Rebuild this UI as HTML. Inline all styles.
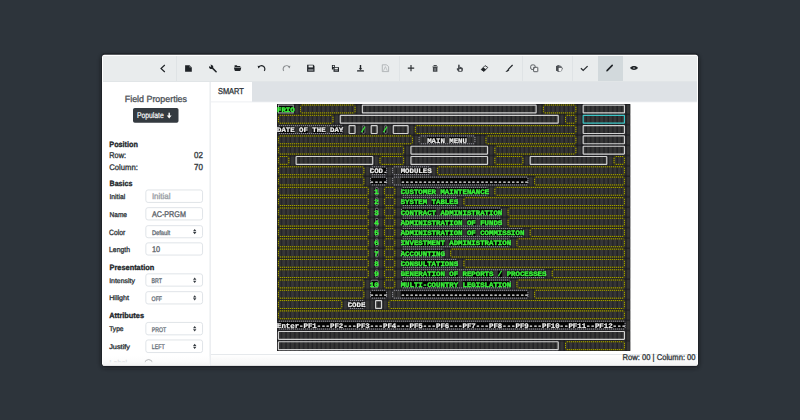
<!DOCTYPE html>
<html><head><meta charset="utf-8"><title>Editor</title><style>
html,body{margin:0;padding:0;width:800px;height:420px;overflow:hidden;background:#2d343b}
svg{display:block}
text{font-family:"Liberation Sans",sans-serif;text-rendering:geometricPrecision}
text.tm{font-family:"Liberation Mono",monospace;font-weight:bold;font-size:6.95px;white-space:pre}
</style></head><body>
<svg width="800" height="420" viewBox="0 0 800 420">
<defs>
<filter id="sh" filterUnits="userSpaceOnUse" x="60" y="20" width="680" height="390"><feGaussianBlur stdDeviation="2.2"/></filter>
<pattern id="cell" x="0" y="0" width="4.4162" height="10.2917" patternUnits="userSpaceOnUse"><rect x="0.6" y="0.6" width="3.4162" height="9.2917" fill="#363636"/></pattern>
<linearGradient id="fade" x1="0" y1="0" x2="0" y2="1"><stop offset="0" stop-color="#fff" stop-opacity="0"/><stop offset="0.35" stop-color="#fff" stop-opacity="0.85"/><stop offset="1" stop-color="#f8f8f8" stop-opacity="0.97"/></linearGradient>
<filter id="nop" x="0" y="0" width="1" height="1"><feOffset dx="0" dy="0"/></filter>

</defs>
<rect x="0" y="0" width="800" height="420" fill="#2d343b"/>
<rect x="101.5" y="55.5" width="597" height="312" rx="3" fill="#15181d" opacity="0.75" filter="url(#sh)"/>
<rect x="101.6" y="54.1" width="596.8" height="312.2" rx="3" fill="none" stroke="#161a20" stroke-width="1.2" opacity="0.35"/>
<rect x="103" y="53.4" width="594" height="1.2" fill="#161a20" opacity="0.45"/>
<rect x="102" y="54.8" width="596" height="311" rx="2.5" fill="#ffffff"/>
<rect x="103" y="56" width="594" height="26" fill="#e9eced"/>
<rect x="176" y="56" width="1" height="26" fill="#dfe3e5"/>
<rect x="399" y="56" width="1" height="26" fill="#dfe3e5"/>
<rect x="522" y="56" width="1" height="26" fill="#dfe3e5"/>
<rect x="572" y="56" width="1" height="26" fill="#dfe3e5"/>
<rect x="103" y="81" width="594" height="1" fill="#e1e5e7"/>
<rect x="598" y="56" width="25" height="25" fill="#d2d9dc"/>
<rect x="209.4" y="82" width="1.6" height="283.5" fill="#eceef1"/>
<rect x="211" y="82" width="486" height="20" fill="#dee2e6"/>
<rect x="211" y="82" width="41" height="20" fill="#ffffff"/>
<rect x="211" y="101.5" width="486" height="0.8" fill="#e9ecef"/>
<text x="218" y="93.8" font-size="8.576" font-weight="normal" fill="#343a40" stroke="#343a40" stroke-width="0.34" textLength="25.8" lengthAdjust="spacingAndGlyphs">SMART</text>
<g transform="translate(277,104)" filter="url(#nop)">
<rect x="0" y="0" width="353.3" height="247" fill="#18181c"/>
<rect x="0" y="0" width="353.3" height="247" fill="url(#cell)"/>
<rect x="0.3" y="1.9" width="17.06" height="6.6" fill="#050505"/>
<rect x="0.3" y="22.48" width="17.06" height="6.6" fill="#050505"/>
<rect x="22.38" y="22.48" width="8.23" height="6.6" fill="#050505"/>
<rect x="35.63" y="22.48" width="12.65" height="6.6" fill="#050505"/>
<rect x="53.29" y="22.48" width="12.65" height="6.6" fill="#050505"/>
<rect x="84.21" y="22.48" width="3.82" height="6.6" fill="#050505"/>
<rect x="106.29" y="22.48" width="3.82" height="6.6" fill="#050505"/>
<rect x="150.45" y="32.77" width="17.06" height="6.6" fill="#050505"/>
<rect x="172.53" y="32.77" width="17.06" height="6.6" fill="#050505"/>
<rect x="93.04" y="63.65" width="17.06" height="6.6" fill="#050505"/>
<rect x="123.95" y="63.65" width="30.31" height="6.6" fill="#050505"/>
<rect x="93.04" y="73.94" width="17.06" height="6.6" fill="#050505"/>
<rect x="123.95" y="73.94" width="127.47" height="6.6" fill="#050505"/>
<rect x="97.46" y="84.23" width="3.82" height="6.6" fill="#050505"/>
<rect x="123.95" y="84.23" width="34.73" height="6.6" fill="#050505"/>
<rect x="163.7" y="84.23" width="47.98" height="6.6" fill="#050505"/>
<rect x="97.46" y="94.53" width="3.82" height="6.6" fill="#050505"/>
<rect x="123.95" y="94.53" width="25.9" height="6.6" fill="#050505"/>
<rect x="154.87" y="94.53" width="25.9" height="6.6" fill="#050505"/>
<rect x="97.46" y="104.82" width="3.82" height="6.6" fill="#050505"/>
<rect x="123.95" y="104.82" width="34.73" height="6.6" fill="#050505"/>
<rect x="163.7" y="104.82" width="61.23" height="6.6" fill="#050505"/>
<rect x="97.46" y="115.11" width="3.82" height="6.6" fill="#050505"/>
<rect x="123.95" y="115.11" width="61.23" height="6.6" fill="#050505"/>
<rect x="190.2" y="115.11" width="8.23" height="6.6" fill="#050505"/>
<rect x="203.45" y="115.11" width="21.48" height="6.6" fill="#050505"/>
<rect x="97.46" y="125.4" width="3.82" height="6.6" fill="#050505"/>
<rect x="123.95" y="125.4" width="61.23" height="6.6" fill="#050505"/>
<rect x="190.2" y="125.4" width="8.23" height="6.6" fill="#050505"/>
<rect x="203.45" y="125.4" width="43.56" height="6.6" fill="#050505"/>
<rect x="97.46" y="135.69" width="3.82" height="6.6" fill="#050505"/>
<rect x="123.95" y="135.69" width="43.56" height="6.6" fill="#050505"/>
<rect x="172.53" y="135.69" width="61.23" height="6.6" fill="#050505"/>
<rect x="97.46" y="145.98" width="3.82" height="6.6" fill="#050505"/>
<rect x="123.95" y="145.98" width="43.56" height="6.6" fill="#050505"/>
<rect x="97.46" y="156.28" width="3.82" height="6.6" fill="#050505"/>
<rect x="123.95" y="156.28" width="56.81" height="6.6" fill="#050505"/>
<rect x="97.46" y="166.57" width="3.82" height="6.6" fill="#050505"/>
<rect x="123.95" y="166.57" width="43.56" height="6.6" fill="#050505"/>
<rect x="172.53" y="166.57" width="8.23" height="6.6" fill="#050505"/>
<rect x="185.78" y="166.57" width="30.31" height="6.6" fill="#050505"/>
<rect x="221.11" y="166.57" width="3.82" height="6.6" fill="#050505"/>
<rect x="229.94" y="166.57" width="39.15" height="6.6" fill="#050505"/>
<rect x="93.04" y="176.86" width="8.23" height="6.6" fill="#050505"/>
<rect x="123.95" y="176.86" width="56.81" height="6.6" fill="#050505"/>
<rect x="185.78" y="176.86" width="47.98" height="6.6" fill="#050505"/>
<rect x="93.04" y="187.15" width="17.06" height="6.6" fill="#050505"/>
<rect x="123.95" y="187.15" width="127.47" height="6.6" fill="#050505"/>
<rect x="70.96" y="197.44" width="17.06" height="6.6" fill="#050505"/>
<rect x="0.3" y="218.03" width="348.28" height="6.6" fill="#050505"/>
<rect x="1.45" y="1.05" width="14.77" height="7.85" fill="none" stroke="#b4b4b8" stroke-width="0.9"/>
<rect x="23.53" y="1.05" width="54.51" height="7.85" rx="1.2" fill="none" stroke="#504e08" stroke-width="1.045"/><g fill="none" stroke="#a8a400" stroke-width="0.95" stroke-dasharray="1 1"><path d="M24.73 1.05H76.84" stroke-dashoffset="1.73"/><path d="M24.73 8.9H76.84" stroke-dashoffset="1.73"/><path d="M23.53 2.25V7.7" stroke-dashoffset="1.25"/><path d="M78.04 2.25V7.7" stroke-dashoffset="1.25"/></g>
<rect x="85.36" y="1.05" width="173.75" height="7.85" rx="0.45" fill="none" stroke="#d2d2d2" stroke-width="1.15"/>
<rect x="266.42" y="1.05" width="32.43" height="7.85" rx="1.2" fill="none" stroke="#504e08" stroke-width="1.045"/><g fill="none" stroke="#a8a400" stroke-width="0.95" stroke-dasharray="1 1"><path d="M267.62 1.05H297.66" stroke-dashoffset="1.62"/><path d="M267.62 8.9H297.66" stroke-dashoffset="1.62"/><path d="M266.42 2.25V7.7" stroke-dashoffset="1.25"/><path d="M298.86 2.25V7.7" stroke-dashoffset="1.25"/></g>
<rect x="306.17" y="1.05" width="41.26" height="7.85" rx="0.45" fill="none" stroke="#d2d2d2" stroke-width="1.15"/>
<rect x="1.45" y="11.34" width="54.51" height="7.85" rx="1.2" fill="none" stroke="#504e08" stroke-width="1.045"/><g fill="none" stroke="#a8a400" stroke-width="0.95" stroke-dasharray="1 1"><path d="M2.65 11.34H54.76" stroke-dashoffset="1.65"/><path d="M2.65 19.19H54.76" stroke-dashoffset="1.65"/><path d="M1.45 12.54V17.99" stroke-dashoffset="1.54"/><path d="M55.96 12.54V17.99" stroke-dashoffset="1.54"/></g>
<rect x="63.28" y="11.34" width="217.91" height="7.85" rx="0.45" fill="none" stroke="#d2d2d2" stroke-width="1.15"/>
<rect x="288.51" y="11.34" width="10.35" height="7.85" rx="1.2" fill="none" stroke="#504e08" stroke-width="1.045"/><g fill="none" stroke="#a8a400" stroke-width="0.95" stroke-dasharray="1 1"><path d="M289.71 11.34H297.66" stroke-dashoffset="1.71"/><path d="M289.71 19.19H297.66" stroke-dashoffset="1.71"/><path d="M288.51 12.54V17.99" stroke-dashoffset="1.54"/><path d="M298.86 12.54V17.99" stroke-dashoffset="1.54"/></g>
<rect x="306.17" y="11.34" width="41.26" height="7.85" rx="0.35" fill="none" stroke="#3cc6c6" stroke-width="1.15"/>
<rect x="0.8" y="21.63" width="64.64" height="7.85" rx="0.9" fill="none" stroke="#404046" stroke-width="0.9900000000000001"/><g fill="none" stroke="#98989e" stroke-width="0.9" stroke-dasharray="1 1"><path d="M1.7 21.63H64.54" stroke-dashoffset="1.7"/><path d="M1.7 29.48H64.54" stroke-dashoffset="1.7"/><path d="M0.8 22.53V28.58" stroke-dashoffset="1.53"/><path d="M65.44 22.53V28.58" stroke-dashoffset="1.53"/></g>
<rect x="72.11" y="21.63" width="5.93" height="7.85" rx="0.45" fill="none" stroke="#d2d2d2" stroke-width="1.15"/>
<rect x="85.21" y="21.83" width="2.72" height="7.45" rx="1" fill="none" stroke="#8c8c92" stroke-width="0.8"/>
<rect x="94.19" y="21.63" width="5.93" height="7.85" rx="0.45" fill="none" stroke="#d2d2d2" stroke-width="1.15"/>
<rect x="107.29" y="21.83" width="2.72" height="7.45" rx="1" fill="none" stroke="#8c8c92" stroke-width="0.8"/>
<rect x="116.27" y="21.63" width="14.77" height="7.85" rx="0.45" fill="none" stroke="#d2d2d2" stroke-width="1.15"/>
<rect x="138.35" y="21.63" width="160.5" height="7.85" rx="1.2" fill="none" stroke="#504e08" stroke-width="1.045"/><g fill="none" stroke="#a8a400" stroke-width="0.95" stroke-dasharray="1 1"><path d="M139.55 21.63H297.66" stroke-dashoffset="1.55"/><path d="M139.55 29.48H297.66" stroke-dashoffset="1.55"/><path d="M138.35 22.83V28.28" stroke-dashoffset="1.83"/><path d="M298.86 22.83V28.28" stroke-dashoffset="1.83"/></g>
<rect x="306.17" y="21.63" width="41.26" height="7.85" rx="0.45" fill="none" stroke="#d2d2d2" stroke-width="1.15"/>
<rect x="1.45" y="31.93" width="134" height="7.85" rx="1.2" fill="none" stroke="#504e08" stroke-width="1.045"/><g fill="none" stroke="#a8a400" stroke-width="0.95" stroke-dasharray="1 1"><path d="M2.65 31.93H134.25" stroke-dashoffset="1.65"/><path d="M2.65 39.77H134.25" stroke-dashoffset="1.65"/><path d="M1.45 33.12V38.57" stroke-dashoffset="1.12"/><path d="M135.45 33.12V38.57" stroke-dashoffset="1.12"/></g>
<rect x="142.12" y="31.93" width="55.81" height="7.85" rx="0.9" fill="none" stroke="#404046" stroke-width="0.9900000000000001"/><g fill="none" stroke="#98989e" stroke-width="0.9" stroke-dasharray="1 1"><path d="M143.02 31.93H197.03" stroke-dashoffset="1.02"/><path d="M143.02 39.77H197.03" stroke-dashoffset="1.02"/><path d="M142.12 32.83V38.88" stroke-dashoffset="1.83"/><path d="M197.93 32.83V38.88" stroke-dashoffset="1.83"/></g>
<rect x="209.01" y="31.93" width="89.84" height="7.85" rx="1.2" fill="none" stroke="#504e08" stroke-width="1.045"/><g fill="none" stroke="#a8a400" stroke-width="0.95" stroke-dasharray="1 1"><path d="M210.21 31.93H297.66" stroke-dashoffset="1.21"/><path d="M210.21 39.77H297.66" stroke-dashoffset="1.21"/><path d="M209.01 33.12V38.57" stroke-dashoffset="1.12"/><path d="M298.86 33.12V38.57" stroke-dashoffset="1.12"/></g>
<rect x="306.17" y="31.93" width="41.26" height="7.85" rx="0.45" fill="none" stroke="#d2d2d2" stroke-width="1.15"/>
<rect x="1.45" y="42.22" width="125.17" height="7.85" rx="1.2" fill="none" stroke="#504e08" stroke-width="1.045"/><g fill="none" stroke="#a8a400" stroke-width="0.95" stroke-dasharray="1 1"><path d="M2.65 42.22H125.42" stroke-dashoffset="1.65"/><path d="M2.65 50.07H125.42" stroke-dashoffset="1.65"/><path d="M1.45 43.42V48.87" stroke-dashoffset="1.42"/><path d="M126.62 43.42V48.87" stroke-dashoffset="1.42"/></g>
<rect x="133.94" y="42.22" width="76.59" height="7.85" rx="0.45" fill="none" stroke="#d2d2d2" stroke-width="1.15"/>
<rect x="217.85" y="42.22" width="81.01" height="7.85" rx="1.2" fill="none" stroke="#504e08" stroke-width="1.045"/><g fill="none" stroke="#a8a400" stroke-width="0.95" stroke-dasharray="1 1"><path d="M219.05 42.22H297.66" stroke-dashoffset="1.05"/><path d="M219.05 50.07H297.66" stroke-dashoffset="1.05"/><path d="M217.85 43.42V48.87" stroke-dashoffset="1.42"/><path d="M298.86 43.42V48.87" stroke-dashoffset="1.42"/></g>
<rect x="306.17" y="42.22" width="41.26" height="7.85" rx="0.45" fill="none" stroke="#d2d2d2" stroke-width="1.15"/>
<rect x="1.45" y="52.51" width="10.35" height="7.85" rx="1.2" fill="none" stroke="#504e08" stroke-width="1.045"/><g fill="none" stroke="#a8a400" stroke-width="0.95" stroke-dasharray="1 1"><path d="M2.65 52.51H10.6" stroke-dashoffset="1.65"/><path d="M2.65 60.36H10.6" stroke-dashoffset="1.65"/><path d="M1.45 53.71V59.16" stroke-dashoffset="1.71"/><path d="M11.8 53.71V59.16" stroke-dashoffset="1.71"/></g>
<rect x="19.11" y="52.51" width="76.59" height="7.85" rx="0.45" fill="none" stroke="#d2d2d2" stroke-width="1.15"/>
<rect x="103.02" y="52.51" width="23.6" height="7.85" rx="1.2" fill="none" stroke="#504e08" stroke-width="1.045"/><g fill="none" stroke="#a8a400" stroke-width="0.95" stroke-dasharray="1 1"><path d="M104.22 52.51H125.42" stroke-dashoffset="1.22"/><path d="M104.22 60.36H125.42" stroke-dashoffset="1.22"/><path d="M103.02 53.71V59.16" stroke-dashoffset="1.71"/><path d="M126.62 53.71V59.16" stroke-dashoffset="1.71"/></g>
<rect x="133.94" y="52.51" width="76.59" height="7.85" rx="0.45" fill="none" stroke="#d2d2d2" stroke-width="1.15"/>
<rect x="217.85" y="52.51" width="28.01" height="7.85" rx="1.2" fill="none" stroke="#504e08" stroke-width="1.045"/><g fill="none" stroke="#a8a400" stroke-width="0.95" stroke-dasharray="1 1"><path d="M219.05 52.51H244.66" stroke-dashoffset="1.05"/><path d="M219.05 60.36H244.66" stroke-dashoffset="1.05"/><path d="M217.85 53.71V59.16" stroke-dashoffset="1.71"/><path d="M245.86 53.71V59.16" stroke-dashoffset="1.71"/></g>
<rect x="253.18" y="52.51" width="76.59" height="7.85" rx="0.45" fill="none" stroke="#d2d2d2" stroke-width="1.15"/>
<rect x="337.08" y="52.51" width="10.35" height="7.85" rx="1.2" fill="none" stroke="#504e08" stroke-width="1.045"/><g fill="none" stroke="#a8a400" stroke-width="0.95" stroke-dasharray="1 1"><path d="M338.28 52.51H346.23" stroke-dashoffset="1.29"/><path d="M338.28 60.36H346.23" stroke-dashoffset="1.29"/><path d="M337.08 53.71V59.16" stroke-dashoffset="1.71"/><path d="M347.43 53.71V59.16" stroke-dashoffset="1.71"/></g>
<rect x="1.45" y="62.8" width="85.42" height="7.85" rx="1.2" fill="none" stroke="#504e08" stroke-width="1.045"/><g fill="none" stroke="#a8a400" stroke-width="0.95" stroke-dasharray="1 1"><path d="M2.65 62.8H85.67" stroke-dashoffset="1.65"/><path d="M2.65 70.65H85.67" stroke-dashoffset="1.65"/><path d="M1.45 64V69.45" stroke-dashoffset="0"/><path d="M86.87 64V69.45" stroke-dashoffset="0"/></g>
<rect x="93.54" y="62.8" width="16.07" height="7.85" rx="0.9" fill="none" stroke="#404046" stroke-width="0.9900000000000001"/><g fill="none" stroke="#98989e" stroke-width="0.9" stroke-dasharray="1 1"><path d="M94.44 62.8H108.71" stroke-dashoffset="1.44"/><path d="M94.44 70.65H108.71" stroke-dashoffset="1.44"/><path d="M93.54 63.7V69.75" stroke-dashoffset="1.7"/><path d="M109.61 63.7V69.75" stroke-dashoffset="1.7"/></g>
<rect x="115.62" y="62.8" width="38.15" height="7.85" rx="0.9" fill="none" stroke="#404046" stroke-width="0.9900000000000001"/><g fill="none" stroke="#98989e" stroke-width="0.9" stroke-dasharray="1 1"><path d="M116.52 62.8H152.87" stroke-dashoffset="1.52"/><path d="M116.52 70.65H152.87" stroke-dashoffset="1.52"/><path d="M115.62 63.7V69.75" stroke-dashoffset="1.7"/><path d="M153.77 63.7V69.75" stroke-dashoffset="1.7"/></g>
<rect x="160.43" y="62.8" width="187" height="7.85" rx="1.2" fill="none" stroke="#504e08" stroke-width="1.045"/><g fill="none" stroke="#a8a400" stroke-width="0.95" stroke-dasharray="1 1"><path d="M161.63 62.8H346.23" stroke-dashoffset="1.63"/><path d="M161.63 70.65H346.23" stroke-dashoffset="1.63"/><path d="M160.43 64V69.45" stroke-dashoffset="0"/><path d="M347.43 64V69.45" stroke-dashoffset="0"/></g>
<rect x="1.45" y="73.09" width="85.42" height="7.85" rx="1.2" fill="none" stroke="#504e08" stroke-width="1.045"/><g fill="none" stroke="#a8a400" stroke-width="0.95" stroke-dasharray="1 1"><path d="M2.65 73.09H85.67" stroke-dashoffset="1.65"/><path d="M2.65 80.94H85.67" stroke-dashoffset="1.65"/><path d="M1.45 74.29V79.74" stroke-dashoffset="1.29"/><path d="M86.87 74.29V79.74" stroke-dashoffset="1.29"/></g>
<rect x="93.54" y="73.09" width="16.07" height="7.85" rx="0.9" fill="none" stroke="#404046" stroke-width="0.9900000000000001"/><g fill="none" stroke="#98989e" stroke-width="0.9" stroke-dasharray="1 1"><path d="M94.44 73.09H108.71" stroke-dashoffset="1.44"/><path d="M94.44 80.94H108.71" stroke-dashoffset="1.44"/><path d="M93.54 73.99V80.04" stroke-dashoffset="1.99"/><path d="M109.61 73.99V80.04" stroke-dashoffset="1.99"/></g>
<rect x="115.62" y="73.09" width="135.3" height="7.85" rx="0.9" fill="none" stroke="#404046" stroke-width="0.9900000000000001"/><g fill="none" stroke="#98989e" stroke-width="0.9" stroke-dasharray="1 1"><path d="M116.52 73.09H250.03" stroke-dashoffset="1.52"/><path d="M116.52 80.94H250.03" stroke-dashoffset="1.52"/><path d="M115.62 73.99V80.04" stroke-dashoffset="1.99"/><path d="M250.93 73.99V80.04" stroke-dashoffset="1.99"/></g>
<rect x="257.59" y="73.09" width="89.84" height="7.85" rx="1.2" fill="none" stroke="#504e08" stroke-width="1.045"/><g fill="none" stroke="#a8a400" stroke-width="0.95" stroke-dasharray="1 1"><path d="M258.79 73.09H346.23" stroke-dashoffset="1.79"/><path d="M258.79 80.94H346.23" stroke-dashoffset="1.79"/><path d="M257.59 74.29V79.74" stroke-dashoffset="1.29"/><path d="M347.43 74.29V79.74" stroke-dashoffset="1.29"/></g>
<rect x="1.45" y="83.38" width="89.84" height="7.85" rx="1.2" fill="none" stroke="#504e08" stroke-width="1.045"/><g fill="none" stroke="#a8a400" stroke-width="0.95" stroke-dasharray="1 1"><path d="M2.65 83.38H90.09" stroke-dashoffset="1.65"/><path d="M2.65 91.23H90.09" stroke-dashoffset="1.65"/><path d="M1.45 84.58V90.03" stroke-dashoffset="1.58"/><path d="M91.29 84.58V90.03" stroke-dashoffset="1.58"/></g>
<rect x="98.46" y="83.58" width="2.72" height="7.45" rx="1" fill="none" stroke="#8c8c92" stroke-width="0.8"/>
<rect x="107.44" y="83.38" width="10.35" height="7.85" rx="1.2" fill="none" stroke="#504e08" stroke-width="1.045"/><g fill="none" stroke="#a8a400" stroke-width="0.95" stroke-dasharray="1 1"><path d="M108.64 83.38H116.59" stroke-dashoffset="1.64"/><path d="M108.64 91.23H116.59" stroke-dashoffset="1.64"/><path d="M107.44 84.58V90.03" stroke-dashoffset="1.58"/><path d="M117.79 84.58V90.03" stroke-dashoffset="1.58"/></g>
<rect x="124.45" y="83.38" width="86.72" height="7.85" rx="0.9" fill="none" stroke="#404046" stroke-width="0.9900000000000001"/><g fill="none" stroke="#98989e" stroke-width="0.9" stroke-dasharray="1 1"><path d="M125.36 83.38H210.28" stroke-dashoffset="1.35"/><path d="M125.36 91.23H210.28" stroke-dashoffset="1.35"/><path d="M124.45 84.28V90.33" stroke-dashoffset="1.28"/><path d="M211.18 84.28V90.33" stroke-dashoffset="1.28"/></g>
<rect x="217.85" y="83.38" width="129.59" height="7.85" rx="1.2" fill="none" stroke="#504e08" stroke-width="1.045"/><g fill="none" stroke="#a8a400" stroke-width="0.95" stroke-dasharray="1 1"><path d="M219.05 83.38H346.23" stroke-dashoffset="1.05"/><path d="M219.05 91.23H346.23" stroke-dashoffset="1.05"/><path d="M217.85 84.58V90.03" stroke-dashoffset="1.58"/><path d="M347.43 84.58V90.03" stroke-dashoffset="1.58"/></g>
<rect x="1.45" y="93.67" width="89.84" height="7.85" rx="1.2" fill="none" stroke="#504e08" stroke-width="1.045"/><g fill="none" stroke="#a8a400" stroke-width="0.95" stroke-dasharray="1 1"><path d="M2.65 93.67H90.09" stroke-dashoffset="1.65"/><path d="M2.65 101.53H90.09" stroke-dashoffset="1.65"/><path d="M1.45 94.88V100.33" stroke-dashoffset="1.88"/><path d="M91.29 94.88V100.33" stroke-dashoffset="1.88"/></g>
<rect x="98.46" y="93.88" width="2.72" height="7.45" rx="1" fill="none" stroke="#8c8c92" stroke-width="0.8"/>
<rect x="107.44" y="93.67" width="10.35" height="7.85" rx="1.2" fill="none" stroke="#504e08" stroke-width="1.045"/><g fill="none" stroke="#a8a400" stroke-width="0.95" stroke-dasharray="1 1"><path d="M108.64 93.67H116.59" stroke-dashoffset="1.64"/><path d="M108.64 101.53H116.59" stroke-dashoffset="1.64"/><path d="M107.44 94.88V100.33" stroke-dashoffset="1.88"/><path d="M117.79 94.88V100.33" stroke-dashoffset="1.88"/></g>
<rect x="124.45" y="93.67" width="55.81" height="7.85" rx="0.9" fill="none" stroke="#404046" stroke-width="0.9900000000000001"/><g fill="none" stroke="#98989e" stroke-width="0.9" stroke-dasharray="1 1"><path d="M125.36 93.67H179.37" stroke-dashoffset="1.35"/><path d="M125.36 101.53H179.37" stroke-dashoffset="1.35"/><path d="M124.45 94.58V100.62" stroke-dashoffset="1.58"/><path d="M180.27 94.58V100.62" stroke-dashoffset="1.58"/></g>
<rect x="186.93" y="93.67" width="160.5" height="7.85" rx="1.2" fill="none" stroke="#504e08" stroke-width="1.045"/><g fill="none" stroke="#a8a400" stroke-width="0.95" stroke-dasharray="1 1"><path d="M188.13 93.67H346.23" stroke-dashoffset="1.13"/><path d="M188.13 101.53H346.23" stroke-dashoffset="1.13"/><path d="M186.93 94.88V100.33" stroke-dashoffset="1.88"/><path d="M347.43 94.88V100.33" stroke-dashoffset="1.88"/></g>
<rect x="1.45" y="103.97" width="89.84" height="7.85" rx="1.2" fill="none" stroke="#504e08" stroke-width="1.045"/><g fill="none" stroke="#a8a400" stroke-width="0.95" stroke-dasharray="1 1"><path d="M2.65 103.97H90.09" stroke-dashoffset="1.65"/><path d="M2.65 111.82H90.09" stroke-dashoffset="1.65"/><path d="M1.45 105.17V110.62" stroke-dashoffset="1.17"/><path d="M91.29 105.17V110.62" stroke-dashoffset="1.17"/></g>
<rect x="98.46" y="104.17" width="2.72" height="7.45" rx="1" fill="none" stroke="#8c8c92" stroke-width="0.8"/>
<rect x="107.44" y="103.97" width="10.35" height="7.85" rx="1.2" fill="none" stroke="#504e08" stroke-width="1.045"/><g fill="none" stroke="#a8a400" stroke-width="0.95" stroke-dasharray="1 1"><path d="M108.64 103.97H116.59" stroke-dashoffset="1.64"/><path d="M108.64 111.82H116.59" stroke-dashoffset="1.64"/><path d="M107.44 105.17V110.62" stroke-dashoffset="1.17"/><path d="M117.79 105.17V110.62" stroke-dashoffset="1.17"/></g>
<rect x="124.45" y="103.97" width="99.97" height="7.85" rx="0.9" fill="none" stroke="#404046" stroke-width="0.9900000000000001"/><g fill="none" stroke="#98989e" stroke-width="0.9" stroke-dasharray="1 1"><path d="M125.36 103.97H223.53" stroke-dashoffset="1.35"/><path d="M125.36 111.82H223.53" stroke-dashoffset="1.35"/><path d="M124.45 104.87V110.92" stroke-dashoffset="1.87"/><path d="M224.43 104.87V110.92" stroke-dashoffset="1.87"/></g>
<rect x="231.09" y="103.97" width="116.34" height="7.85" rx="1.2" fill="none" stroke="#504e08" stroke-width="1.045"/><g fill="none" stroke="#a8a400" stroke-width="0.95" stroke-dasharray="1 1"><path d="M232.29 103.97H346.23" stroke-dashoffset="1.29"/><path d="M232.29 111.82H346.23" stroke-dashoffset="1.29"/><path d="M231.09 105.17V110.62" stroke-dashoffset="1.17"/><path d="M347.43 105.17V110.62" stroke-dashoffset="1.17"/></g>
<rect x="1.45" y="114.26" width="89.84" height="7.85" rx="1.2" fill="none" stroke="#504e08" stroke-width="1.045"/><g fill="none" stroke="#a8a400" stroke-width="0.95" stroke-dasharray="1 1"><path d="M2.65 114.26H90.09" stroke-dashoffset="1.65"/><path d="M2.65 122.11H90.09" stroke-dashoffset="1.65"/><path d="M1.45 115.46V120.91" stroke-dashoffset="1.46"/><path d="M91.29 115.46V120.91" stroke-dashoffset="1.46"/></g>
<rect x="98.46" y="114.46" width="2.72" height="7.45" rx="1" fill="none" stroke="#8c8c92" stroke-width="0.8"/>
<rect x="107.44" y="114.26" width="10.35" height="7.85" rx="1.2" fill="none" stroke="#504e08" stroke-width="1.045"/><g fill="none" stroke="#a8a400" stroke-width="0.95" stroke-dasharray="1 1"><path d="M108.64 114.26H116.59" stroke-dashoffset="1.64"/><path d="M108.64 122.11H116.59" stroke-dashoffset="1.64"/><path d="M107.44 115.46V120.91" stroke-dashoffset="1.46"/><path d="M117.79 115.46V120.91" stroke-dashoffset="1.46"/></g>
<rect x="124.45" y="114.26" width="99.97" height="7.85" rx="0.9" fill="none" stroke="#404046" stroke-width="0.9900000000000001"/><g fill="none" stroke="#98989e" stroke-width="0.9" stroke-dasharray="1 1"><path d="M125.36 114.26H223.53" stroke-dashoffset="1.35"/><path d="M125.36 122.11H223.53" stroke-dashoffset="1.35"/><path d="M124.45 115.16V121.21" stroke-dashoffset="1.16"/><path d="M224.43 115.16V121.21" stroke-dashoffset="1.16"/></g>
<rect x="231.09" y="114.26" width="116.34" height="7.85" rx="1.2" fill="none" stroke="#504e08" stroke-width="1.045"/><g fill="none" stroke="#a8a400" stroke-width="0.95" stroke-dasharray="1 1"><path d="M232.29 114.26H346.23" stroke-dashoffset="1.29"/><path d="M232.29 122.11H346.23" stroke-dashoffset="1.29"/><path d="M231.09 115.46V120.91" stroke-dashoffset="1.46"/><path d="M347.43 115.46V120.91" stroke-dashoffset="1.46"/></g>
<rect x="1.45" y="124.55" width="89.84" height="7.85" rx="1.2" fill="none" stroke="#504e08" stroke-width="1.045"/><g fill="none" stroke="#a8a400" stroke-width="0.95" stroke-dasharray="1 1"><path d="M2.65 124.55H90.09" stroke-dashoffset="1.65"/><path d="M2.65 132.4H90.09" stroke-dashoffset="1.65"/><path d="M1.45 125.75V131.2" stroke-dashoffset="1.75"/><path d="M91.29 125.75V131.2" stroke-dashoffset="1.75"/></g>
<rect x="98.46" y="124.75" width="2.72" height="7.45" rx="1" fill="none" stroke="#8c8c92" stroke-width="0.8"/>
<rect x="107.44" y="124.55" width="10.35" height="7.85" rx="1.2" fill="none" stroke="#504e08" stroke-width="1.045"/><g fill="none" stroke="#a8a400" stroke-width="0.95" stroke-dasharray="1 1"><path d="M108.64 124.55H116.59" stroke-dashoffset="1.64"/><path d="M108.64 132.4H116.59" stroke-dashoffset="1.64"/><path d="M107.44 125.75V131.2" stroke-dashoffset="1.75"/><path d="M117.79 125.75V131.2" stroke-dashoffset="1.75"/></g>
<rect x="124.45" y="124.55" width="122.05" height="7.85" rx="0.9" fill="none" stroke="#404046" stroke-width="0.9900000000000001"/><g fill="none" stroke="#98989e" stroke-width="0.9" stroke-dasharray="1 1"><path d="M125.36 124.55H245.61" stroke-dashoffset="1.35"/><path d="M125.36 132.4H245.61" stroke-dashoffset="1.35"/><path d="M124.45 125.45V131.5" stroke-dashoffset="1.45"/><path d="M246.51 125.45V131.5" stroke-dashoffset="1.45"/></g>
<rect x="253.18" y="124.55" width="94.26" height="7.85" rx="1.2" fill="none" stroke="#504e08" stroke-width="1.045"/><g fill="none" stroke="#a8a400" stroke-width="0.95" stroke-dasharray="1 1"><path d="M254.38 124.55H346.23" stroke-dashoffset="1.38"/><path d="M254.38 132.4H346.23" stroke-dashoffset="1.38"/><path d="M253.18 125.75V131.2" stroke-dashoffset="1.75"/><path d="M347.43 125.75V131.2" stroke-dashoffset="1.75"/></g>
<rect x="1.45" y="134.84" width="89.84" height="7.85" rx="1.2" fill="none" stroke="#504e08" stroke-width="1.045"/><g fill="none" stroke="#a8a400" stroke-width="0.95" stroke-dasharray="1 1"><path d="M2.65 134.84H90.09" stroke-dashoffset="1.65"/><path d="M2.65 142.69H90.09" stroke-dashoffset="1.65"/><path d="M1.45 136.04V141.49" stroke-dashoffset="1.04"/><path d="M91.29 136.04V141.49" stroke-dashoffset="1.04"/></g>
<rect x="98.46" y="135.04" width="2.72" height="7.45" rx="1" fill="none" stroke="#8c8c92" stroke-width="0.8"/>
<rect x="107.44" y="134.84" width="10.35" height="7.85" rx="1.2" fill="none" stroke="#504e08" stroke-width="1.045"/><g fill="none" stroke="#a8a400" stroke-width="0.95" stroke-dasharray="1 1"><path d="M108.64 134.84H116.59" stroke-dashoffset="1.64"/><path d="M108.64 142.69H116.59" stroke-dashoffset="1.64"/><path d="M107.44 136.04V141.49" stroke-dashoffset="1.04"/><path d="M117.79 136.04V141.49" stroke-dashoffset="1.04"/></g>
<rect x="124.45" y="134.84" width="108.81" height="7.85" rx="0.9" fill="none" stroke="#404046" stroke-width="0.9900000000000001"/><g fill="none" stroke="#98989e" stroke-width="0.9" stroke-dasharray="1 1"><path d="M125.36 134.84H232.36" stroke-dashoffset="1.35"/><path d="M125.36 142.69H232.36" stroke-dashoffset="1.35"/><path d="M124.45 135.74V141.79" stroke-dashoffset="1.74"/><path d="M233.26 135.74V141.79" stroke-dashoffset="1.74"/></g>
<rect x="239.93" y="134.84" width="107.51" height="7.85" rx="1.2" fill="none" stroke="#504e08" stroke-width="1.045"/><g fill="none" stroke="#a8a400" stroke-width="0.95" stroke-dasharray="1 1"><path d="M241.13 134.84H346.23" stroke-dashoffset="1.13"/><path d="M241.13 142.69H346.23" stroke-dashoffset="1.13"/><path d="M239.93 136.04V141.49" stroke-dashoffset="1.04"/><path d="M347.43 136.04V141.49" stroke-dashoffset="1.04"/></g>
<rect x="1.45" y="145.13" width="89.84" height="7.85" rx="1.2" fill="none" stroke="#504e08" stroke-width="1.045"/><g fill="none" stroke="#a8a400" stroke-width="0.95" stroke-dasharray="1 1"><path d="M2.65 145.13H90.09" stroke-dashoffset="1.65"/><path d="M2.65 152.98H90.09" stroke-dashoffset="1.65"/><path d="M1.45 146.33V151.78" stroke-dashoffset="1.33"/><path d="M91.29 146.33V151.78" stroke-dashoffset="1.33"/></g>
<rect x="98.46" y="145.33" width="2.72" height="7.45" rx="1" fill="none" stroke="#8c8c92" stroke-width="0.8"/>
<rect x="107.44" y="145.13" width="10.35" height="7.85" rx="1.2" fill="none" stroke="#504e08" stroke-width="1.045"/><g fill="none" stroke="#a8a400" stroke-width="0.95" stroke-dasharray="1 1"><path d="M108.64 145.13H116.59" stroke-dashoffset="1.64"/><path d="M108.64 152.98H116.59" stroke-dashoffset="1.64"/><path d="M107.44 146.33V151.78" stroke-dashoffset="1.33"/><path d="M117.79 146.33V151.78" stroke-dashoffset="1.33"/></g>
<rect x="124.45" y="145.13" width="42.56" height="7.85" rx="0.9" fill="none" stroke="#404046" stroke-width="0.9900000000000001"/><g fill="none" stroke="#98989e" stroke-width="0.9" stroke-dasharray="1 1"><path d="M125.36 145.13H166.12" stroke-dashoffset="1.35"/><path d="M125.36 152.98H166.12" stroke-dashoffset="1.35"/><path d="M124.45 146.03V152.08" stroke-dashoffset="1.03"/><path d="M167.02 146.03V152.08" stroke-dashoffset="1.03"/></g>
<rect x="173.68" y="145.13" width="173.75" height="7.85" rx="1.2" fill="none" stroke="#504e08" stroke-width="1.045"/><g fill="none" stroke="#a8a400" stroke-width="0.95" stroke-dasharray="1 1"><path d="M174.88 145.13H346.23" stroke-dashoffset="1.88"/><path d="M174.88 152.98H346.23" stroke-dashoffset="1.88"/><path d="M173.68 146.33V151.78" stroke-dashoffset="1.33"/><path d="M347.43 146.33V151.78" stroke-dashoffset="1.33"/></g>
<rect x="1.45" y="155.43" width="89.84" height="7.85" rx="1.2" fill="none" stroke="#504e08" stroke-width="1.045"/><g fill="none" stroke="#a8a400" stroke-width="0.95" stroke-dasharray="1 1"><path d="M2.65 155.43H90.09" stroke-dashoffset="1.65"/><path d="M2.65 163.28H90.09" stroke-dashoffset="1.65"/><path d="M1.45 156.62V162.08" stroke-dashoffset="1.62"/><path d="M91.29 156.62V162.08" stroke-dashoffset="1.62"/></g>
<rect x="98.46" y="155.62" width="2.72" height="7.45" rx="1" fill="none" stroke="#8c8c92" stroke-width="0.8"/>
<rect x="107.44" y="155.43" width="10.35" height="7.85" rx="1.2" fill="none" stroke="#504e08" stroke-width="1.045"/><g fill="none" stroke="#a8a400" stroke-width="0.95" stroke-dasharray="1 1"><path d="M108.64 155.43H116.59" stroke-dashoffset="1.64"/><path d="M108.64 163.28H116.59" stroke-dashoffset="1.64"/><path d="M107.44 156.62V162.08" stroke-dashoffset="1.62"/><path d="M117.79 156.62V162.08" stroke-dashoffset="1.62"/></g>
<rect x="124.45" y="155.43" width="55.81" height="7.85" rx="0.9" fill="none" stroke="#404046" stroke-width="0.9900000000000001"/><g fill="none" stroke="#98989e" stroke-width="0.9" stroke-dasharray="1 1"><path d="M125.36 155.43H179.37" stroke-dashoffset="1.35"/><path d="M125.36 163.28H179.37" stroke-dashoffset="1.35"/><path d="M124.45 156.33V162.38" stroke-dashoffset="1.32"/><path d="M180.27 156.33V162.38" stroke-dashoffset="1.32"/></g>
<rect x="186.93" y="155.43" width="160.5" height="7.85" rx="1.2" fill="none" stroke="#504e08" stroke-width="1.045"/><g fill="none" stroke="#a8a400" stroke-width="0.95" stroke-dasharray="1 1"><path d="M188.13 155.43H346.23" stroke-dashoffset="1.13"/><path d="M188.13 163.28H346.23" stroke-dashoffset="1.13"/><path d="M186.93 156.62V162.08" stroke-dashoffset="1.62"/><path d="M347.43 156.62V162.08" stroke-dashoffset="1.62"/></g>
<rect x="1.45" y="165.72" width="89.84" height="7.85" rx="1.2" fill="none" stroke="#504e08" stroke-width="1.045"/><g fill="none" stroke="#a8a400" stroke-width="0.95" stroke-dasharray="1 1"><path d="M2.65 165.72H90.09" stroke-dashoffset="1.65"/><path d="M2.65 173.57H90.09" stroke-dashoffset="1.65"/><path d="M1.45 166.92V172.37" stroke-dashoffset="1.92"/><path d="M91.29 166.92V172.37" stroke-dashoffset="1.92"/></g>
<rect x="98.46" y="165.92" width="2.72" height="7.45" rx="1" fill="none" stroke="#8c8c92" stroke-width="0.8"/>
<rect x="107.44" y="165.72" width="10.35" height="7.85" rx="1.2" fill="none" stroke="#504e08" stroke-width="1.045"/><g fill="none" stroke="#a8a400" stroke-width="0.95" stroke-dasharray="1 1"><path d="M108.64 165.72H116.59" stroke-dashoffset="1.64"/><path d="M108.64 173.57H116.59" stroke-dashoffset="1.64"/><path d="M107.44 166.92V172.37" stroke-dashoffset="1.92"/><path d="M117.79 166.92V172.37" stroke-dashoffset="1.92"/></g>
<rect x="124.45" y="165.72" width="144.14" height="7.85" rx="0.9" fill="none" stroke="#404046" stroke-width="0.9900000000000001"/><g fill="none" stroke="#98989e" stroke-width="0.9" stroke-dasharray="1 1"><path d="M125.36 165.72H267.69" stroke-dashoffset="1.35"/><path d="M125.36 173.57H267.69" stroke-dashoffset="1.35"/><path d="M124.45 166.62V172.67" stroke-dashoffset="1.62"/><path d="M268.59 166.62V172.67" stroke-dashoffset="1.62"/></g>
<rect x="275.26" y="165.72" width="72.18" height="7.85" rx="1.2" fill="none" stroke="#504e08" stroke-width="1.045"/><g fill="none" stroke="#a8a400" stroke-width="0.95" stroke-dasharray="1 1"><path d="M276.46 165.72H346.23" stroke-dashoffset="1.46"/><path d="M276.46 173.57H346.23" stroke-dashoffset="1.46"/><path d="M275.26 166.92V172.37" stroke-dashoffset="1.92"/><path d="M347.43 166.92V172.37" stroke-dashoffset="1.92"/></g>
<rect x="1.45" y="176.01" width="85.42" height="7.85" rx="1.2" fill="none" stroke="#504e08" stroke-width="1.045"/><g fill="none" stroke="#a8a400" stroke-width="0.95" stroke-dasharray="1 1"><path d="M2.65 176.01H85.67" stroke-dashoffset="1.65"/><path d="M2.65 183.86H85.67" stroke-dashoffset="1.65"/><path d="M1.45 177.21V182.66" stroke-dashoffset="1.21"/><path d="M86.87 177.21V182.66" stroke-dashoffset="1.21"/></g>
<rect x="94.04" y="176.21" width="7.13" height="7.45" rx="1" fill="none" stroke="#8c8c92" stroke-width="0.8"/>
<rect x="107.44" y="176.01" width="10.35" height="7.85" rx="1.2" fill="none" stroke="#504e08" stroke-width="1.045"/><g fill="none" stroke="#a8a400" stroke-width="0.95" stroke-dasharray="1 1"><path d="M108.64 176.01H116.59" stroke-dashoffset="1.64"/><path d="M108.64 183.86H116.59" stroke-dashoffset="1.64"/><path d="M107.44 177.21V182.66" stroke-dashoffset="1.21"/><path d="M117.79 177.21V182.66" stroke-dashoffset="1.21"/></g>
<rect x="124.45" y="176.01" width="108.81" height="7.85" rx="0.9" fill="none" stroke="#404046" stroke-width="0.9900000000000001"/><g fill="none" stroke="#98989e" stroke-width="0.9" stroke-dasharray="1 1"><path d="M125.36 176.01H232.36" stroke-dashoffset="1.35"/><path d="M125.36 183.86H232.36" stroke-dashoffset="1.35"/><path d="M124.45 176.91V182.96" stroke-dashoffset="1.91"/><path d="M233.26 176.91V182.96" stroke-dashoffset="1.91"/></g>
<rect x="239.93" y="176.01" width="107.51" height="7.85" rx="1.2" fill="none" stroke="#504e08" stroke-width="1.045"/><g fill="none" stroke="#a8a400" stroke-width="0.95" stroke-dasharray="1 1"><path d="M241.13 176.01H346.23" stroke-dashoffset="1.13"/><path d="M241.13 183.86H346.23" stroke-dashoffset="1.13"/><path d="M239.93 177.21V182.66" stroke-dashoffset="1.21"/><path d="M347.43 177.21V182.66" stroke-dashoffset="1.21"/></g>
<rect x="1.45" y="186.3" width="85.42" height="7.85" rx="1.2" fill="none" stroke="#504e08" stroke-width="1.045"/><g fill="none" stroke="#a8a400" stroke-width="0.95" stroke-dasharray="1 1"><path d="M2.65 186.3H85.67" stroke-dashoffset="1.65"/><path d="M2.65 194.15H85.67" stroke-dashoffset="1.65"/><path d="M1.45 187.5V192.95" stroke-dashoffset="1.5"/><path d="M86.87 187.5V192.95" stroke-dashoffset="1.5"/></g>
<rect x="93.54" y="186.3" width="16.07" height="7.85" rx="0.9" fill="none" stroke="#404046" stroke-width="0.9900000000000001"/><g fill="none" stroke="#98989e" stroke-width="0.9" stroke-dasharray="1 1"><path d="M94.44 186.3H108.71" stroke-dashoffset="1.44"/><path d="M94.44 194.15H108.71" stroke-dashoffset="1.44"/><path d="M93.54 187.2V193.25" stroke-dashoffset="1.2"/><path d="M109.61 187.2V193.25" stroke-dashoffset="1.2"/></g>
<rect x="115.62" y="186.3" width="135.3" height="7.85" rx="0.9" fill="none" stroke="#404046" stroke-width="0.9900000000000001"/><g fill="none" stroke="#98989e" stroke-width="0.9" stroke-dasharray="1 1"><path d="M116.52 186.3H250.03" stroke-dashoffset="1.52"/><path d="M116.52 194.15H250.03" stroke-dashoffset="1.52"/><path d="M115.62 187.2V193.25" stroke-dashoffset="1.2"/><path d="M250.93 187.2V193.25" stroke-dashoffset="1.2"/></g>
<rect x="257.59" y="186.3" width="89.84" height="7.85" rx="1.2" fill="none" stroke="#504e08" stroke-width="1.045"/><g fill="none" stroke="#a8a400" stroke-width="0.95" stroke-dasharray="1 1"><path d="M258.79 186.3H346.23" stroke-dashoffset="1.79"/><path d="M258.79 194.15H346.23" stroke-dashoffset="1.79"/><path d="M257.59 187.5V192.95" stroke-dashoffset="1.5"/><path d="M347.43 187.5V192.95" stroke-dashoffset="1.5"/></g>
<rect x="1.45" y="196.59" width="63.34" height="7.85" rx="1.2" fill="none" stroke="#504e08" stroke-width="1.045"/><g fill="none" stroke="#a8a400" stroke-width="0.95" stroke-dasharray="1 1"><path d="M2.65 196.59H63.59" stroke-dashoffset="1.65"/><path d="M2.65 204.44H63.59" stroke-dashoffset="1.65"/><path d="M1.45 197.79V203.24" stroke-dashoffset="1.79"/><path d="M64.79 197.79V203.24" stroke-dashoffset="1.79"/></g>
<rect x="71.46" y="196.59" width="16.06" height="7.85" rx="0.9" fill="none" stroke="#404046" stroke-width="0.9900000000000001"/><g fill="none" stroke="#98989e" stroke-width="0.9" stroke-dasharray="1 1"><path d="M72.36 196.59H86.62" stroke-dashoffset="1.36"/><path d="M72.36 204.44H86.62" stroke-dashoffset="1.36"/><path d="M71.46 197.49V203.54" stroke-dashoffset="1.49"/><path d="M87.52 197.49V203.54" stroke-dashoffset="1.49"/></g>
<rect x="98.61" y="196.59" width="5.93" height="7.85" rx="0.45" fill="none" stroke="#d2d2d2" stroke-width="1.15"/>
<rect x="111.86" y="196.59" width="235.58" height="7.85" rx="1.2" fill="none" stroke="#504e08" stroke-width="1.045"/><g fill="none" stroke="#a8a400" stroke-width="0.95" stroke-dasharray="1 1"><path d="M113.06 196.59H346.23" stroke-dashoffset="1.06"/><path d="M113.06 204.44H346.23" stroke-dashoffset="1.06"/><path d="M111.86 197.79V203.24" stroke-dashoffset="1.79"/><path d="M347.43 197.79V203.24" stroke-dashoffset="1.79"/></g>
<rect x="1.45" y="206.88" width="345.98" height="7.85" rx="1.2" fill="none" stroke="#504e08" stroke-width="1.045"/><g fill="none" stroke="#a8a400" stroke-width="0.95" stroke-dasharray="1 1"><path d="M2.65 206.88H346.23" stroke-dashoffset="1.65"/><path d="M2.65 214.73H346.23" stroke-dashoffset="1.65"/><path d="M1.45 208.08V213.53" stroke-dashoffset="1.08"/><path d="M347.43 208.08V213.53" stroke-dashoffset="1.08"/></g>
<rect x="0.8" y="217.18" width="347.28" height="7.85" rx="0.9" fill="none" stroke="#404046" stroke-width="0.9900000000000001"/><g fill="none" stroke="#98989e" stroke-width="0.9" stroke-dasharray="1 1"><path d="M1.7 217.18H347.18" stroke-dashoffset="1.7"/><path d="M1.7 225.03H347.18" stroke-dashoffset="1.7"/><path d="M0.8 218.08V224.12" stroke-dashoffset="1.07"/><path d="M348.08 218.08V224.12" stroke-dashoffset="1.07"/></g>
<rect x="1.45" y="227.47" width="345.98" height="7.85" rx="0.45" fill="none" stroke="#d2d2d2" stroke-width="1.15"/>
<rect x="1.45" y="237.76" width="279.74" height="7.85" rx="0.45" fill="none" stroke="#d2d2d2" stroke-width="1.15"/>
<rect x="288.51" y="237.76" width="58.93" height="7.85" rx="1.2" fill="none" stroke="#504e08" stroke-width="1.045"/><g fill="none" stroke="#a8a400" stroke-width="0.95" stroke-dasharray="1 1"><path d="M289.71 237.76H346.23" stroke-dashoffset="1.71"/><path d="M289.71 245.61H346.23" stroke-dashoffset="1.71"/><path d="M288.51 238.96V244.41" stroke-dashoffset="1.96"/><path d="M347.43 238.96V244.41" stroke-dashoffset="1.96"/></g>
<text class="tm" x="0" y="7.7" fill="#3af23a" stroke="#3af23a" stroke-width="0.38" textLength="17.66" lengthAdjust="spacingAndGlyphs" xml:space="preserve">FRIO</text>
<text class="tm" x="0" y="28.28" fill="#f0f0f0" stroke="#f0f0f0" stroke-width="0.22" textLength="66.24" lengthAdjust="spacingAndGlyphs" xml:space="preserve">DATE OF THE DAY</text>
<text class="tm" x="83.91" y="28.28" fill="#3af23a" stroke="#3af23a" stroke-width="0.38" textLength="4.42" lengthAdjust="spacingAndGlyphs" xml:space="preserve">/</text>
<text class="tm" x="105.99" y="28.28" fill="#3af23a" stroke="#3af23a" stroke-width="0.38" textLength="4.42" lengthAdjust="spacingAndGlyphs" xml:space="preserve">/</text>
<text class="tm" x="150.15" y="38.58" fill="#f0f0f0" stroke="#f0f0f0" stroke-width="0.22" textLength="39.75" lengthAdjust="spacingAndGlyphs" xml:space="preserve">MAIN MENU</text>
<text class="tm" x="92.74" y="69.45" fill="#f0f0f0" stroke="#f0f0f0" stroke-width="0.22" textLength="17.66" lengthAdjust="spacingAndGlyphs" xml:space="preserve">COD.</text>
<text class="tm" x="123.66" y="69.45" fill="#f0f0f0" stroke="#f0f0f0" stroke-width="0.22" textLength="30.91" lengthAdjust="spacingAndGlyphs" xml:space="preserve">MODULES</text>
<text class="tm" x="92.74" y="79.74" fill="#f0f0f0" stroke="#f0f0f0" stroke-width="0.22" textLength="17.66" lengthAdjust="spacingAndGlyphs" xml:space="preserve">----</text>
<text class="tm" x="123.66" y="79.74" fill="#f0f0f0" stroke="#f0f0f0" stroke-width="0.22" textLength="128.07" lengthAdjust="spacingAndGlyphs" xml:space="preserve">-----------------------------</text>
<text class="tm" x="97.16" y="90.03" fill="#3af23a" stroke="#3af23a" stroke-width="0.38" textLength="4.42" lengthAdjust="spacingAndGlyphs" xml:space="preserve">1</text>
<text class="tm" x="123.66" y="90.03" fill="#3af23a" stroke="#3af23a" stroke-width="0.38" textLength="88.32" lengthAdjust="spacingAndGlyphs" xml:space="preserve">CUSTOMER MAINTENANCE</text>
<text class="tm" x="97.16" y="100.33" fill="#3af23a" stroke="#3af23a" stroke-width="0.38" textLength="4.42" lengthAdjust="spacingAndGlyphs" xml:space="preserve">2</text>
<text class="tm" x="123.66" y="100.33" fill="#3af23a" stroke="#3af23a" stroke-width="0.38" textLength="57.41" lengthAdjust="spacingAndGlyphs" xml:space="preserve">SYSTEM TABLES</text>
<text class="tm" x="97.16" y="110.62" fill="#3af23a" stroke="#3af23a" stroke-width="0.38" textLength="4.42" lengthAdjust="spacingAndGlyphs" xml:space="preserve">3</text>
<text class="tm" x="123.66" y="110.62" fill="#3af23a" stroke="#3af23a" stroke-width="0.38" textLength="101.57" lengthAdjust="spacingAndGlyphs" xml:space="preserve">CONTRACT ADMINISTRATION</text>
<text class="tm" x="97.16" y="120.91" fill="#3af23a" stroke="#3af23a" stroke-width="0.38" textLength="4.42" lengthAdjust="spacingAndGlyphs" xml:space="preserve">4</text>
<text class="tm" x="123.66" y="120.91" fill="#3af23a" stroke="#3af23a" stroke-width="0.38" textLength="101.57" lengthAdjust="spacingAndGlyphs" xml:space="preserve">ADMINISTRATION OF FUNDS</text>
<text class="tm" x="97.16" y="131.2" fill="#3af23a" stroke="#3af23a" stroke-width="0.38" textLength="4.42" lengthAdjust="spacingAndGlyphs" xml:space="preserve">5</text>
<text class="tm" x="123.66" y="131.2" fill="#3af23a" stroke="#3af23a" stroke-width="0.38" textLength="123.66" lengthAdjust="spacingAndGlyphs" xml:space="preserve">ADMINISTRATION OF COMMISSION</text>
<text class="tm" x="97.16" y="141.49" fill="#3af23a" stroke="#3af23a" stroke-width="0.38" textLength="4.42" lengthAdjust="spacingAndGlyphs" xml:space="preserve">6</text>
<text class="tm" x="123.66" y="141.49" fill="#3af23a" stroke="#3af23a" stroke-width="0.38" textLength="110.41" lengthAdjust="spacingAndGlyphs" xml:space="preserve">INVESTMENT ADMINISTRATION</text>
<text class="tm" x="97.16" y="151.78" fill="#3af23a" stroke="#3af23a" stroke-width="0.38" textLength="4.42" lengthAdjust="spacingAndGlyphs" xml:space="preserve">7</text>
<text class="tm" x="123.66" y="151.78" fill="#3af23a" stroke="#3af23a" stroke-width="0.38" textLength="44.16" lengthAdjust="spacingAndGlyphs" xml:space="preserve">ACCOUNTING</text>
<text class="tm" x="97.16" y="162.07" fill="#3af23a" stroke="#3af23a" stroke-width="0.38" textLength="4.42" lengthAdjust="spacingAndGlyphs" xml:space="preserve">8</text>
<text class="tm" x="123.66" y="162.07" fill="#3af23a" stroke="#3af23a" stroke-width="0.38" textLength="57.41" lengthAdjust="spacingAndGlyphs" xml:space="preserve">CONSULTATIONS</text>
<text class="tm" x="97.16" y="172.37" fill="#3af23a" stroke="#3af23a" stroke-width="0.38" textLength="4.42" lengthAdjust="spacingAndGlyphs" xml:space="preserve">9</text>
<text class="tm" x="123.66" y="172.37" fill="#3af23a" stroke="#3af23a" stroke-width="0.38" textLength="145.74" lengthAdjust="spacingAndGlyphs" xml:space="preserve">GENERATION OF REPORTS / PROCESSES</text>
<text class="tm" x="92.74" y="182.66" fill="#3af23a" stroke="#3af23a" stroke-width="0.38" textLength="8.83" lengthAdjust="spacingAndGlyphs" xml:space="preserve">10</text>
<text class="tm" x="123.66" y="182.66" fill="#3af23a" stroke="#3af23a" stroke-width="0.38" textLength="110.41" lengthAdjust="spacingAndGlyphs" xml:space="preserve">MULTI-COUNTRY LEGISLATION</text>
<text class="tm" x="92.74" y="192.95" fill="#f0f0f0" stroke="#f0f0f0" stroke-width="0.22" textLength="17.66" lengthAdjust="spacingAndGlyphs" xml:space="preserve">----</text>
<text class="tm" x="123.66" y="192.95" fill="#f0f0f0" stroke="#f0f0f0" stroke-width="0.22" textLength="128.07" lengthAdjust="spacingAndGlyphs" xml:space="preserve">-----------------------------</text>
<text class="tm" x="70.66" y="203.24" fill="#f0f0f0" stroke="#f0f0f0" stroke-width="0.22" textLength="17.66" lengthAdjust="spacingAndGlyphs" xml:space="preserve">CODE</text>
<text class="tm" x="0" y="223.82" fill="#f0f0f0" stroke="#f0f0f0" stroke-width="0.22" textLength="348.88" lengthAdjust="spacingAndGlyphs" xml:space="preserve">Enter-PF1---PF2---PF3---PF4---PF5---PF6---PF7---PF8---PF9---PF10--PF11--PF12---</text>
</g>
<linearGradient id="sbg" x1="0" y1="0" x2="0" y2="1"><stop offset="0" stop-color="#ffffff"/><stop offset="1" stop-color="#f3f3f3"/></linearGradient>
<rect x="211" y="354.7" width="486" height="10.8" fill="url(#sbg)"/>
<rect x="211" y="354" width="486" height="0.9" fill="#e4e7ea"/>
<text x="622.5" y="359.5" font-size="8.285" font-weight="normal" fill="#343a40" stroke="#343a40" stroke-width="0.34" textLength="73.1" lengthAdjust="spacingAndGlyphs">Row: 00 | Column: 00</text>
<text x="124.75" y="101.75" font-size="9.012" font-weight="normal" fill="#50555b" stroke="#50555b" stroke-width="0.34" textLength="62.25" lengthAdjust="spacingAndGlyphs">Field Properties</text>
<rect x="133" y="108" width="45.5" height="14.8" rx="1.8" fill="#343a40"/>
<text x="136.9" y="117.9" font-size="8.140" font-weight="normal" fill="#ffffff" stroke="#ffffff" stroke-width="0.18" textLength="26.9" lengthAdjust="spacingAndGlyphs">Populate</text>
<rect x="168.5" y="112.7" width="1.4" height="3.4" fill="#fff"/><path d="M166.8 115.4 H171.6 L169.2 118.6 Z" fill="#fff"/>
<text x="109.3" y="146.9" font-size="7.849" font-weight="bold" fill="#212529" stroke="#212529" stroke-width="0.32" textLength="28.6" lengthAdjust="spacingAndGlyphs">Position</text>
<text x="109.3" y="158.4" font-size="8.285" font-weight="normal" fill="#343a40" stroke="#343a40" stroke-width="0.34" textLength="16.7" lengthAdjust="spacingAndGlyphs">Row:</text>
<text x="194" y="158.4" font-size="8.721" font-weight="normal" fill="#343a40" stroke="#343a40" stroke-width="0.34" textLength="8.9" lengthAdjust="spacingAndGlyphs">02</text>
<text x="109.3" y="170.1" font-size="8.140" font-weight="normal" fill="#343a40" stroke="#343a40" stroke-width="0.34" textLength="28.6" lengthAdjust="spacingAndGlyphs">Column:</text>
<text x="194" y="170.2" font-size="8.721" font-weight="normal" fill="#343a40" stroke="#343a40" stroke-width="0.34" textLength="8.9" lengthAdjust="spacingAndGlyphs">70</text>
<text x="109.5" y="185.7" font-size="7.704" font-weight="bold" fill="#212529" stroke="#212529" stroke-width="0.32" textLength="22.9" lengthAdjust="spacingAndGlyphs">Basics</text>
<rect x="145.85" y="189.95" width="56.7" height="12.5" rx="2.2" fill="#fff" stroke="#dde1e5" stroke-width="0.9"/>
<text x="109.5" y="198.8" font-size="6.977" font-weight="normal" fill="#343a40" stroke="#343a40" stroke-width="0.34" textLength="15.7" lengthAdjust="spacingAndGlyphs">Initial</text>
<text x="151.9" y="198.9" font-size="8.285" font-weight="normal" fill="#9aa0a6" stroke="#9aa0a6" stroke-width="0.34" textLength="18.6" lengthAdjust="spacingAndGlyphs">Initial</text>
<rect x="145.85" y="207.65" width="56.7" height="12.3" rx="2.2" fill="#fff" stroke="#dde1e5" stroke-width="0.9"/>
<text x="109.5" y="216.7" font-size="6.977" font-weight="normal" fill="#343a40" stroke="#343a40" stroke-width="0.34" textLength="17.5" lengthAdjust="spacingAndGlyphs">Name</text>
<text x="151.9" y="216.8" font-size="8.285" font-weight="normal" fill="#5d646b" stroke="#5d646b" stroke-width="0.34" textLength="34" lengthAdjust="spacingAndGlyphs">AC-PRGM</text>
<rect x="145.85" y="225.65" width="56.7" height="12.1" rx="2.2" fill="#fff" stroke="#dde1e5" stroke-width="0.9"/>
<text x="109" y="234.6" font-size="7.558" font-weight="normal" fill="#343a40" stroke="#343a40" stroke-width="0.34" textLength="16.2" lengthAdjust="spacingAndGlyphs">Color</text>
<text x="151.9" y="234.6" font-size="6.541" font-weight="normal" fill="#6c757d" stroke="#6c757d" stroke-width="0.34" textLength="18.2" lengthAdjust="spacingAndGlyphs">Default</text>
<path d="M193 231.15 L194.7 228.9 L196.4 231.15 Z M193 232.05 L194.7 234.3 L196.4 232.05 Z" fill="#343a40"/>
<rect x="145.85" y="242.85" width="56.7" height="12.2" rx="2.2" fill="#fff" stroke="#dde1e5" stroke-width="0.9"/>
<text x="109" y="252" font-size="7.268" font-weight="normal" fill="#343a40" stroke="#343a40" stroke-width="0.34" textLength="21" lengthAdjust="spacingAndGlyphs">Length</text>
<text x="151.9" y="251.8" font-size="8.285" font-weight="normal" fill="#5d646b" stroke="#5d646b" stroke-width="0.34" textLength="8.2" lengthAdjust="spacingAndGlyphs">10</text>
<text x="109.6" y="269.7" font-size="7.704" font-weight="bold" fill="#212529" stroke="#212529" stroke-width="0.32" textLength="44.6" lengthAdjust="spacingAndGlyphs">Presentation</text>
<rect x="145.85" y="273.85" width="56.7" height="12.3" rx="2.2" fill="#fff" stroke="#dde1e5" stroke-width="0.9"/>
<text x="109.2" y="282.9" font-size="6.686" font-weight="normal" fill="#343a40" stroke="#343a40" stroke-width="0.34" textLength="25.7" lengthAdjust="spacingAndGlyphs">Intensity</text>
<text x="151.6" y="283.1" font-size="6.541" font-weight="normal" fill="#6c757d" stroke="#6c757d" stroke-width="0.34" textLength="10.4" lengthAdjust="spacingAndGlyphs">BRT</text>
<path d="M193 279.75 L194.7 277.5 L196.4 279.75 Z M193 280.65 L194.7 282.9 L196.4 280.65 Z" fill="#343a40"/>
<rect x="145.85" y="291.65" width="56.7" height="12.3" rx="2.2" fill="#fff" stroke="#dde1e5" stroke-width="0.9"/>
<text x="109.2" y="300.4" font-size="6.686" font-weight="normal" fill="#343a40" stroke="#343a40" stroke-width="0.34" textLength="19.7" lengthAdjust="spacingAndGlyphs">Hilight</text>
<text x="151.6" y="300.8" font-size="6.541" font-weight="normal" fill="#6c757d" stroke="#6c757d" stroke-width="0.34" textLength="10.4" lengthAdjust="spacingAndGlyphs">OFF</text>
<path d="M193 297.45 L194.7 295.2 L196.4 297.45 Z M193 298.35 L194.7 300.6 L196.4 298.35 Z" fill="#343a40"/>
<text x="109.2" y="318.3" font-size="7.558" font-weight="bold" fill="#212529" stroke="#212529" stroke-width="0.32" textLength="34.8" lengthAdjust="spacingAndGlyphs">Attributes</text>
<rect x="145.85" y="322.45" width="56.7" height="12.4" rx="2.2" fill="#fff" stroke="#dde1e5" stroke-width="0.9"/>
<text x="109.2" y="331.4" font-size="6.832" font-weight="normal" fill="#343a40" stroke="#343a40" stroke-width="0.34" textLength="14.3" lengthAdjust="spacingAndGlyphs">Type</text>
<text x="151.8" y="331.8" font-size="6.686" font-weight="normal" fill="#6c757d" stroke="#6c757d" stroke-width="0.34" textLength="14.5" lengthAdjust="spacingAndGlyphs">PROT</text>
<path d="M193 328.35 L194.7 326.1 L196.4 328.35 Z M193 329.25 L194.7 331.5 L196.4 329.25 Z" fill="#343a40"/>
<rect x="145.85" y="339.95" width="56.7" height="12.6" rx="2.2" fill="#fff" stroke="#dde1e5" stroke-width="0.9"/>
<text x="109.2" y="348.8" font-size="6.541" font-weight="normal" fill="#343a40" stroke="#343a40" stroke-width="0.34" textLength="20.8" lengthAdjust="spacingAndGlyphs">Justify</text>
<text x="151.8" y="349.1" font-size="6.686" font-weight="normal" fill="#6c757d" stroke="#6c757d" stroke-width="0.34" textLength="12.8" lengthAdjust="spacingAndGlyphs">LEFT</text>
<path d="M193 345.95 L194.7 343.7 L196.4 345.95 Z M193 346.85 L194.7 349.1 L196.4 346.85 Z" fill="#343a40"/>
<clipPath id="sbclip"><rect x="103" y="300" width="107" height="62.2"/></clipPath>
<g clip-path="url(#sbclip)">
<text x="109.5" y="365" font-size="6.977" font-weight="normal" fill="#c4c8cc" stroke="#c4c8cc" stroke-width="0.34" textLength="17.5" lengthAdjust="spacingAndGlyphs">Label</text>
<circle cx="148.6" cy="363.4" r="3.8" fill="none" stroke="#6a6e72" stroke-width="0.9"/>
</g>
<linearGradient id="sfade" x1="0" y1="0" x2="0" y2="1"><stop offset="0" stop-color="#ffffff" stop-opacity="0"/><stop offset="1" stop-color="#f3f3f3" stop-opacity="1"/></linearGradient>
<rect x="103" y="355" width="107" height="10.7" fill="url(#sfade)"/>
<g id="icons" fill="#1f2327" stroke="none">
<!-- chevron -->
<path d="M164.8 65 L161 68.5 L164.8 72" fill="none" stroke="#1f2327" stroke-width="1.15"/>
<!-- file -->
<path d="M185.1 65.2 H189.6 L191.8 67.4 V71.7 H185.1 Z"/>
<path d="M189.4 65.3 L191.7 67.6 H189.4 Z" fill="#7d8185"/>
<!-- wrench -->
<path d="M212 67.6 L216.1 71.7" stroke="#1f2327" stroke-width="1.55" fill="none" stroke-linecap="round"/>
<path d="M209.1 65.9 L210.2 67 L211.3 65.9 L210.2 64.8 A2.3 2.3 0 0 1 213.1 67.9 L212.2 68.8 A2.3 2.3 0 0 1 209.1 65.9 Z"/>
<!-- folder open -->
<path d="M234.6 65.2 H236.8 L237.4 65.9 H240.3 V66.9 H234.6 Z"/>
<path d="M233.9 67.4 H241.3 L240.6 70.3 Q240.4 70.9 239.8 70.9 H235.3 Q234.7 70.9 234.6 70.3 Z"/>
<!-- undo -->
<path d="M258.7 67.2 A3.1 3.1 0 1 1 264.3 70.9" fill="none" stroke="#1f2327" stroke-width="1.2"/>
<path d="M257.6 65.8 L260.4 66.3 L258.3 68.5 Z"/>
<!-- redo -->
<path d="M289.3 67.2 A3.1 3.1 0 1 0 283.7 70.9" fill="none" stroke="#8a8d90" stroke-width="1.1"/>
<path d="M290.4 65.8 L287.6 66.3 L289.7 68.5 Z" fill="#8a8d90"/>
<!-- save -->
<path d="M307.1 64.8 H313.4 L314.5 65.9 V71.7 H307.1 Z"/>
<rect x="308.5" y="65.4" width="4.4" height="2.0" fill="#e9eced"/>
<rect x="308.2" y="68.9" width="5.2" height="2.2" fill="#75797d"/>
<!-- copy/merge -->
<path d="M331.9 64.9 H334.8 V67.9 H333.4 V69.4 H331.9 Z"/>
<rect x="332.8" y="65.7" width="1.2" height="1.3" fill="#e9eced"/>
<path d="M333.5 67.2 H339 V71.8 H333.5 Z"/>
<rect x="334.6" y="67.9" width="3.3" height="1.5" fill="#e9eced"/>
<rect x="334.6" y="70.2" width="3.3" height="0.9" fill="#8a8e92"/>
<!-- download -->
<path d="M360.5 65 V69.4" stroke="#1f2327" stroke-width="1.4"/>
<path d="M358.8 68.2 H362.2 L360.5 70 Z"/>
<rect x="357" y="70.2" width="7" height="1.4" rx="0.6"/>
<!-- pdf -->
<path d="M382.3 64.8 H386.6 L388.6 66.8 V71.6 H382.3 Z" fill="none" stroke="#a6a9ac" stroke-width="0.8"/>
<path d="M383.5 70.8 L385.4 66.6 L387.3 70.8" fill="none" stroke="#a6a9ac" stroke-width="0.6"/>
<!-- plus -->
<path d="M411 65 V71.3 M407.8 68.15 H414.2" stroke="#2a2e32" stroke-width="1.15"/>
<!-- trash -->
<path d="M432.4 66.5 H437.9 V67.3 H437.4 V71.7 H432.9 V67.3 H432.4 Z" fill="#43474b"/>
<path d="M433.8 65 H436.5 L437 66.1 H433.3 Z" fill="#43474b"/>
<rect x="434.4" y="68.2" width="1.3" height="2.6" fill="#8d9195"/>
<!-- hand pointer -->
<path d="M458.9 65.4 V68.4" stroke="#44484c" stroke-width="1.6" stroke-linecap="round"/>
<path d="M457 68.3 Q456.4 68.8 457 69.8 L458.2 71.4 Q458.5 71.8 459 71.8 H461.6 Q462.8 71.6 462.9 70 V68.6 Q462.6 67.3 461.3 67.2 Q460.6 66.6 459.7 66.9 L459.6 68.2 Z" fill="#44484c"/>
<ellipse cx="460.3" cy="70" rx="1.25" ry="1.05" fill="#f4f5f6"/>
<!-- eraser -->
<path d="M481.2 69.6 L485 65.6 L487.8 67.4 L484 71.4 Z" fill="none" stroke="#2a2e32" stroke-width="0.9"/>
<path d="M481.2 69.6 L483.3 67.4 L486 69.3 L484 71.4 Z"/>
<!-- brush -->
<path d="M512.6 65 L508 69.6" stroke="#1f2327" stroke-width="1.1"/>
<path d="M508.4 68.9 L506 71.3 L505.5 72 L507.8 71.5 L509.5 70 Z"/>
<!-- clone -->
<rect x="530.7" y="64.9" width="4.5" height="4.6" rx="1.5" fill="none" stroke="#5a5e62" stroke-width="1"/>
<rect x="533.6" y="67.3" width="4.2" height="4.4" rx="0.4" fill="#f1f2f3" stroke="#5a5e62" stroke-width="1"/>
<path d="M533.6 69.5 L535.4 67.3 H533.6 Z" fill="#5a5e62"/>
<!-- clone 2 -->
<path d="M556 66.3 L558.6 65 L561.2 65.9 L562.7 68.3 L561.9 71 L558.8 72 L556 70.6 Z" fill="#6a6e72"/>
<path d="M556 66.3 L558.6 65 L558.8 72 L556 70.6 Z" fill="#4a4e52"/>
<path d="M558.7 68.1 L561.9 68.1 L561.3 71 L558.7 71.2 Z" fill="#f2f3f4"/>
<!-- check -->
<path d="M580.9 68.3 L583.2 70.4 L587.6 66.1" fill="none" stroke="#2a2e32" stroke-width="1.3"/>
<!-- pencil -->
<path d="M612.2 65.4 L607.3 70.4" stroke="#1f2327" stroke-width="1.6" stroke-linecap="round"/>
<path d="M607 70 L606 71.6 L607.6 70.9 Z"/>
<!-- eye -->
<path d="M630 68 C632 65.4 636 65.4 638 68 C636 70.6 632 70.6 630 68 Z"/>
<circle cx="634" cy="68" r="1.1" fill="#7c8084"/>
</g>

</svg>
</body></html>
